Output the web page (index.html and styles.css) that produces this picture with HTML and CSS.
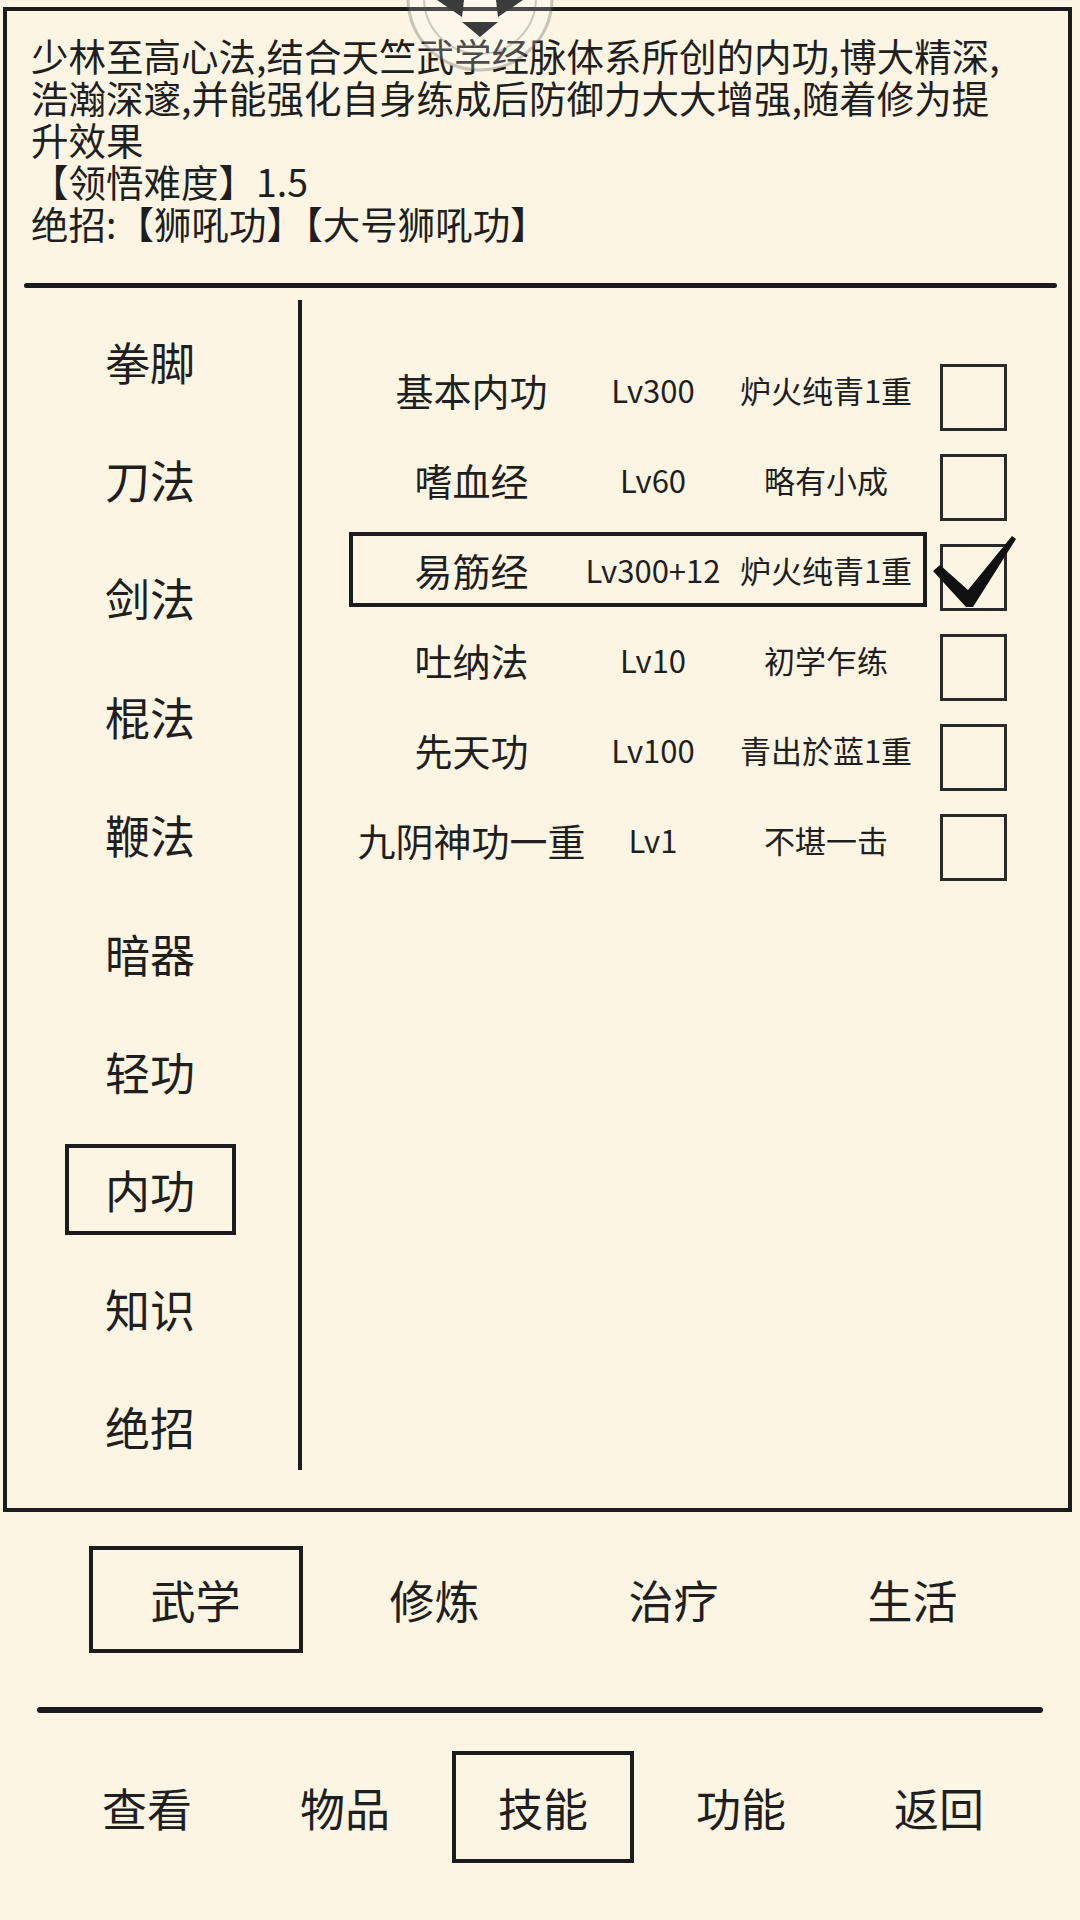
FILE: index.html
```html
<!doctype html>
<html lang="zh">
<head>
    <meta charset="UTF-8">
    <meta name="viewport" content="width=device-width, initial-scale=1.0">
    <title>技能 - 内功</title>
    <link rel="stylesheet" href="styles.css">
</head>
<body>
    <div class="screen">
        <div class="panel">
            <p class="desc">少林至高心法,结合天竺武学经脉体系所创的内功,博大精深,浩瀚深邃,并能强化自身练成后防御力大大增强,随着修为提升效果<br>【领悟难度】1.5<br>绝招:【狮吼功】【大号狮吼功】</p>
            <div class="rule"></div>
            <div class="body">
                <ul class="cats">
                    <li>拳脚</li>
                    <li>刀法</li>
                    <li>剑法</li>
                    <li>棍法</li>
                    <li>鞭法</li>
                    <li>暗器</li>
                    <li>轻功</li>
                    <li class="on"><span>内功</span></li>
                    <li>知识</li>
                    <li>绝招</li>
                </ul>
                <div class="vline"></div>
                <div class="skills">
                    <div class="skill">
                        <div class="skill-info">
                            <span class="name">基本内功</span>
                            <span class="lv">Lv300</span>
                            <span class="state">炉火纯青1重</span>
                        </div>
                        <span class="check"></span>
                    </div>
                    <div class="skill">
                        <div class="skill-info">
                            <span class="name">嗜血经</span>
                            <span class="lv">Lv60</span>
                            <span class="state">略有小成</span>
                        </div>
                        <span class="check"></span>
                    </div>
                    <div class="skill">
                        <div class="skill-info on">
                            <span class="name">易筋经</span>
                            <span class="lv">Lv300+12</span>
                            <span class="state">炉火纯青1重</span>
                        </div>
                        <span class="check">
                            <svg width="67" height="67" viewBox="0 0 67 67">
                                <path d="M-7 27 L0 21 L28 46 L72 -8 L76 -5 L33 63 L26 63 Z" fill="#111"/>
                            </svg>
                        </span>
                    </div>
                    <div class="skill">
                        <div class="skill-info">
                            <span class="name">吐纳法</span>
                            <span class="lv">Lv10</span>
                            <span class="state">初学乍练</span>
                        </div>
                        <span class="check"></span>
                    </div>
                    <div class="skill">
                        <div class="skill-info">
                            <span class="name">先天功</span>
                            <span class="lv">Lv100</span>
                            <span class="state">青出於蓝1重</span>
                        </div>
                        <span class="check"></span>
                    </div>
                    <div class="skill">
                        <div class="skill-info">
                            <span class="name">九阴神功一重</span>
                            <span class="lv">Lv1</span>
                            <span class="state">不堪一击</span>
                        </div>
                        <span class="check"></span>
                    </div>
                </div>
            </div>
        </div>

        <ul class="tabs">
            <li class="on"><span>武学</span></li>
            <li>修炼</li>
            <li>治疗</li>
            <li>生活</li>
        </ul>

        <div class="rule rule-bottom"></div>

        <ul class="nav">
            <li>查看</li>
            <li>物品</li>
            <li class="on"><span>技能</span></li>
            <li>功能</li>
            <li>返回</li>
        </ul>

        <!-- floating pull-down button -->
        <svg class="float-btn" width="160" height="80" viewBox="0 0 160 80">
            <circle cx="80" cy="-2" r="72" fill="rgba(255,255,255,0.2)" stroke="rgba(80,80,80,0.3)" stroke-width="3"/>
            <circle cx="80" cy="-2" r="56" fill="none" stroke="rgba(80,80,80,0.28)" stroke-width="2"/>
            <polygon points="37,0 64,0 62,17" fill="#3b3b3b"/>
            <polygon points="96,0 123,0 98,17" fill="#3b3b3b"/>
            <polygon points="62,22 98,22 80,37" fill="#3b3b3b"/>
        </svg>
    </div>
</body>
</html>
```

FILE: styles.css
```css
body {
    margin: 0;
    background-color: #fcf5e4;
    font-family: "Noto Sans CJK SC", "Noto Sans", sans-serif;
    color: #1f1f1f;
}
ul {
    list-style: none;
    margin: 0;
    padding: 0;
}
.screen {
    position: relative;
    width: 1080px;
    height: 1920px;
    padding-top: 7px;
    box-sizing: border-box;
    overflow: hidden;
}
.panel {
    margin: 0 8px 0 3px;
    height: 1505px;
    border: 4px solid #1c1c1c;
    box-sizing: border-box;
    display: flex;
    flex-direction: column;
}
.desc {
    margin: 0;
    padding: 23px 52px 0 24px;
    font-size: 37.5px;
    line-height: 42px;
}
.rule {
    height: 5px;
    background-color: #1c1c1c;
    border-radius: 3px;
}
.panel .rule {
    margin: 39px 11px 0 17px;
}
.body {
    flex: 1;
    display: flex;
}
.cats {
    width: 291px;
    padding: 14px 5px 0 0;
    box-sizing: border-box;
}
.cats li {
    height: 118.4px;
    display: flex;
    align-items: center;
    justify-content: center;
    font-size: 45px;
}
.cats .on span {
    width: 171px;
    height: 91px;
    border: 4px solid #1c1c1c;
    box-sizing: border-box;
    display: flex;
    align-items: center;
    justify-content: center;
}
.vline {
    width: 4px;
    margin: 12px 0 38px;
    background-color: #1c1c1c;
}
.skills {
    flex: 1;
    padding: 56px 0 0 47px;
}
.skill {
    display: flex;
    align-items: center;
    height: 90px;
}
.skill-info {
    width: 578px;
    height: 75px;
    border: 4px solid transparent;
    box-sizing: border-box;
    display: grid;
    grid-template-columns: 237px 126px 1fr;
    align-items: center;
    justify-items: center;
    white-space: nowrap;
}
.skill-info.on {
    border-color: #1c1c1c;
}
.name {
    font-size: 38px;
}
.lv,
.state {
    font-size: 31px;
}
.state {
    padding-left: 13px;
}
.check {
    position: relative;
    width: 67px;
    height: 67px;
    margin: 16px 0 0 13px;
    border: 3px solid #2a2a2a;
    box-sizing: border-box;
}
.check svg {
    position: absolute;
    left: -3px;
    top: -3px;
    overflow: visible;
}
.tabs {
    display: flex;
    margin-top: 34px;
    padding-left: 76px;
}
.tabs li {
    width: 239px;
    height: 107px;
    display: flex;
    align-items: center;
    justify-content: center;
    font-size: 45px;
}
.tabs .on span {
    width: 214px;
    height: 107px;
    border: 4px solid #1c1c1c;
    box-sizing: border-box;
    display: flex;
    align-items: center;
    justify-content: center;
}
.rule-bottom {
    height: 6px;
    margin: 54px 37px 0;
}
.nav {
    display: flex;
    margin-top: 38px;
    padding-left: 48px;
}
.nav li {
    width: 198px;
    height: 112px;
    display: flex;
    align-items: center;
    justify-content: center;
    font-size: 45px;
}
.nav .on span {
    width: 182px;
    height: 112px;
    border: 4px solid #1c1c1c;
    box-sizing: border-box;
    display: flex;
    align-items: center;
    justify-content: center;
}
.float-btn {
    position: absolute;
    left: 400px;
    top: 0;
}
```
